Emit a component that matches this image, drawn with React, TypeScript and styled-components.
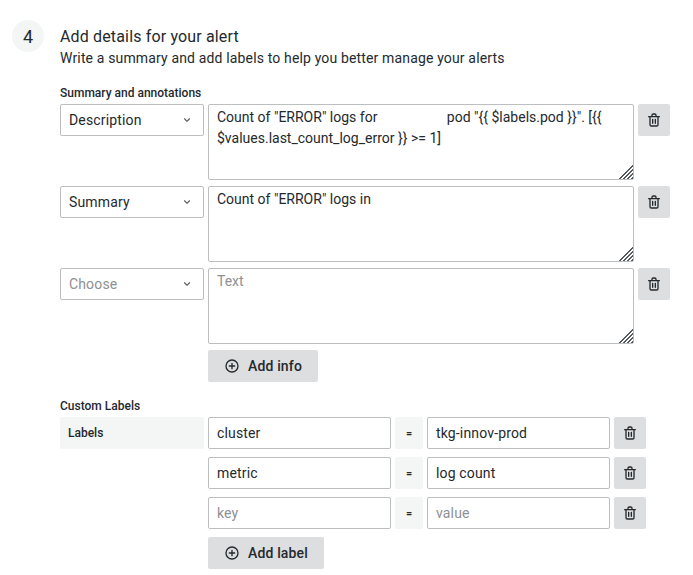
import React from "react";
import styled, { createGlobalStyle } from "styled-components";

const GlobalStyle = createGlobalStyle`
  html, body {
    margin: 0;
    padding: 0;
    background: #fff;
    font-family: Roboto, "Liberation Sans", sans-serif;
    color: #24292e;
  }
  * { box-sizing: border-box; }
`;

const Page = styled.div`
  width: 693px;
  height: 575px;
  overflow: hidden;
  display: flex;
  gap: 16px;
  padding: 20px 0 0 12px;
`;

const StepNumber = styled.div`
  width: 32px;
  height: 32px;
  flex: none;
  border-radius: 50%;
  background: #f4f5f5;
  display: flex;
  align-items: center;
  justify-content: center;
  font-size: 18px;
  line-height: 32px;
  padding-top: 1px;
`;

const Content = styled.div`
  flex: 1;
  display: flex;
  flex-direction: column;
`;

const Title = styled.div`
  font-size: 16px;
  line-height: 22px;
  margin-top: 6px;
  letter-spacing: 0.15px;
`;

const Subtitle = styled.div`
  font-size: 14px;
  line-height: 21px;
  letter-spacing: 0.15px;
  margin-bottom: 17px;
`;

const SectionLabel = styled.div`
  font-size: 12px;
  font-weight: 500;
  line-height: 15px;
  margin-bottom: 3px;
`;

const Rows = styled.div`
  display: flex;
  flex-direction: column;
  gap: 6px;
`;

const AnnotationRow = styled.div`
  display: flex;
  align-items: flex-start;
  gap: 4px;
`;

const SelectBox = styled.div<{ $placeholder?: boolean }>`
  width: 144px;
  height: 32px;
  flex: none;
  border: 1px solid #bdbebf;
  border-radius: 2px;
  background: #fff;
  display: flex;
  align-items: center;
  justify-content: space-between;
  padding: 0 9px 0 8px;
  font-size: 14px;
  letter-spacing: 0.15px;
  color: ${(p) => (p.$placeholder ? "#8e9193" : "#24292e")};
  svg { color: #5a5e62; }
`;

const TextArea = styled.textarea`
  width: 426px;
  height: 76px;
  flex: none;
  display: block;
  margin: 0;
  border: 1px solid #bdbebf;
  border-radius: 2px;
  padding: 2px 8px;
  font-family: Roboto, "Liberation Sans", sans-serif;
  font-size: 14px;
  line-height: 21px;
  color: #24292e;
  outline: none;
  resize: both;
  &::placeholder { color: #8e9193; opacity: 1; }
  &::-webkit-resizer {
    background:
      linear-gradient(135deg, #fff 50%, transparent 50%),
      repeating-linear-gradient(135deg, #555a5f 0 1.2px, #fff 1.2px 2.8px);
  }
`;

const IconButton = styled.button`
  width: 32px;
  height: 32px;
  flex: none;
  border: none;
  border-radius: 2px;
  background: #dcdedf;
  color: #24292e;
  padding: 0;
  display: flex;
  align-items: center;
  justify-content: center;
`;

const AddButton = styled.button<{ $width: number }>`
  width: ${(p) => p.$width}px;
  height: 32px;
  border: none;
  border-radius: 2px;
  background: #dcdedf;
  color: #24292e;
  display: flex;
  align-items: center;
  gap: 8px;
  padding: 0 16px;
  font-family: inherit;
  font-size: 14px;
  font-weight: 500;
  letter-spacing: 0.15px;
`;

const AddInfoSlot = styled.div`
  padding-left: 148px;
  margin-top: 6px;
  margin-bottom: 17px;
`;

const LabelRows = styled.div`
  display: flex;
  flex-direction: column;
  gap: 8px;
`;

const LabelRow = styled.div`
  display: flex;
  gap: 4px;
`;

const RowTitle = styled.div<{ $empty?: boolean }>`
  width: 144px;
  height: 32px;
  flex: none;
  background: ${(p) => (p.$empty ? "transparent" : "#f4f5f5")};
  border-radius: 2px;
  padding: 0 8px;
  display: flex;
  align-items: center;
  font-size: 12px;
  font-weight: 500;
`;

const LabelInput = styled.input`
  width: 183px;
  height: 32px;
  flex: none;
  border: 1px solid #bdbebf;
  border-radius: 2px;
  padding: 0 8px;
  margin: 0;
  font-family: inherit;
  font-size: 14px;
  letter-spacing: 0.15px;
  color: #24292e;
  outline: none;
  &::placeholder { color: #8e9193; opacity: 1; }
`;

const Equals = styled.div`
  width: 28px;
  height: 32px;
  flex: none;
  background: #f4f5f5;
  border-radius: 2px;
  display: flex;
  align-items: center;
  justify-content: center;
  font-size: 11px;
  font-weight: 500;
`;

const AddLabelSlot = styled.div`
  padding-left: 148px;
  margin-top: 8px;
`;

const Trash = () => (
  <svg width="16" height="16" viewBox="0 0 24 24" fill="currentColor">
    <path d="M10,18a1,1,0,0,0,1-1V11a1,1,0,0,0-2,0v6A1,1,0,0,0,10,18ZM20,6H16V5a3,3,0,0,0-3-3H11A3,3,0,0,0,8,5V6H4A1,1,0,0,0,4,8H5V19a3,3,0,0,0,3,3h8a3,3,0,0,0,3-3V8h1a1,1,0,0,0,0-2ZM10,5a1,1,0,0,1,1-1h2a1,1,0,0,1,1,1V6H10Zm7,14a1,1,0,0,1-1,1H8a1,1,0,0,1-1-1V8H17Zm-3-1a1,1,0,0,0,1-1V11a1,1,0,0,0-2,0v6A1,1,0,0,0,14,18Z" />
  </svg>
);

const PlusCircle = () => (
  <svg width="16" height="16" viewBox="0 0 24 24" fill="currentColor">
    <path d="M12,2A10,10,0,1,0,22,12,10,10,0,0,0,12,2Zm0,18a8,8,0,1,1,8-8A8,8,0,0,1,12,20Zm4-9H13V8a1,1,0,0,0-2,0v3H8a1,1,0,0,0,0,2h3v3a1,1,0,0,0,2,0V13h3a1,1,0,0,0,0-2Z" />
  </svg>
);

const AngleDown = () => (
  <svg width="14" height="14" viewBox="0 0 24 24" fill="currentColor">
    <path d="M17,9.17a1,1,0,0,0-1.41,0L12,12.71,8.46,9.17a1,1,0,0,0-1.41,0,1,1,0,0,0,0,1.42l4.24,4.24a1,1,0,0,0,1.42,0L17,10.59A1,1,0,0,0,17,9.17Z" />
  </svg>
);

const annotations = [
  {
    name: "Description",
    value:
      'Count of "ERROR" logs for                    pod "{{ $labels.pod }}". [{{ $values.last_count_log_error }} >= 1]',
  },
  { name: "Summary", value: 'Count of "ERROR" logs in' },
  { name: "Choose", value: "", empty: true },
];

const labels = [
  { key: "cluster", value: "tkg-innov-prod" },
  { key: "metric", value: "log count" },
  { key: "", value: "" },
];

export default function App() {
  return (
    <Page>
      <GlobalStyle />
      <StepNumber>4</StepNumber>
      <Content>
        <Title>Add details for your alert</Title>
        <Subtitle>Write a summary and add labels to help you better manage your alerts</Subtitle>

        <SectionLabel>Summary and annotations</SectionLabel>
        <Rows>
          {annotations.map((a) => (
            <AnnotationRow key={a.name}>
              <SelectBox $placeholder={a.empty}>
                {a.name}
                <AngleDown />
              </SelectBox>
              <TextArea defaultValue={a.value} placeholder="Text" />
              <IconButton>
                <Trash />
              </IconButton>
            </AnnotationRow>
          ))}
        </Rows>
        <AddInfoSlot>
          <AddButton $width={110}>
            <PlusCircle />
            Add info
          </AddButton>
        </AddInfoSlot>

        <SectionLabel>Custom Labels</SectionLabel>
        <LabelRows>
          {labels.map((l, i) => (
            <LabelRow key={i}>
              <RowTitle $empty={i > 0}>{i === 0 ? "Labels" : ""}</RowTitle>
              <LabelInput defaultValue={l.key} placeholder="key" />
              <Equals>=</Equals>
              <LabelInput defaultValue={l.value} placeholder="value" />
              <IconButton>
                <Trash />
              </IconButton>
            </LabelRow>
          ))}
        </LabelRows>
        <AddLabelSlot>
          <AddButton $width={116}>
            <PlusCircle />
            Add label
          </AddButton>
        </AddLabelSlot>
      </Content>
    </Page>
  );
}
